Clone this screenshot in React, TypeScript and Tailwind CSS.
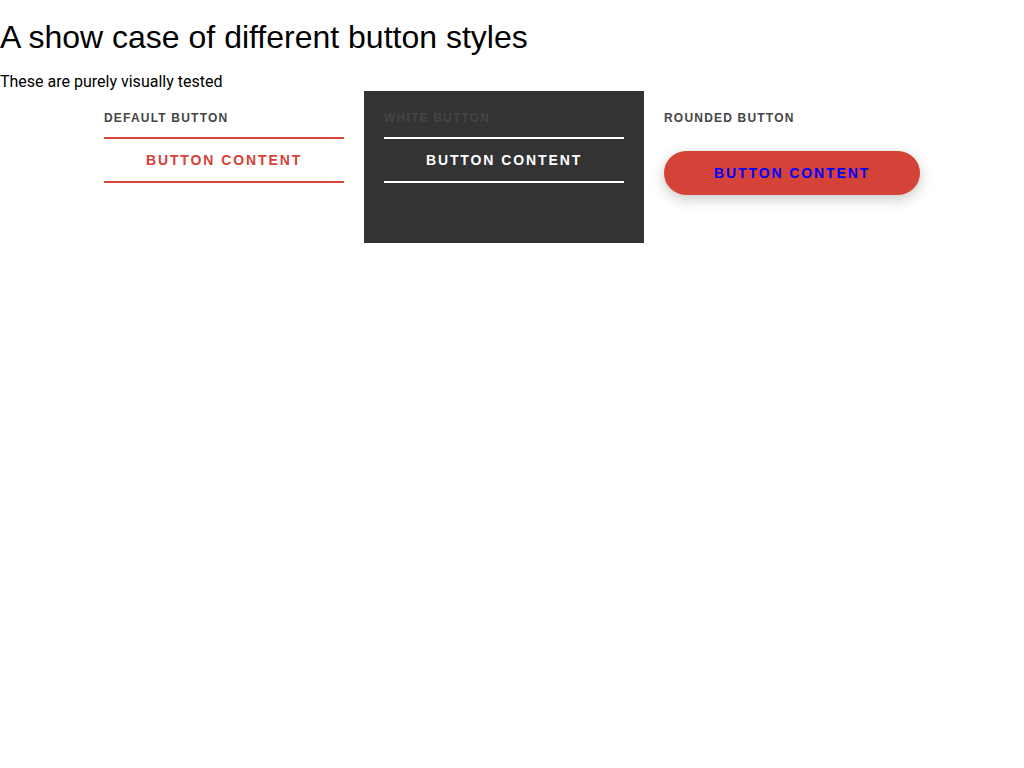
const labelClass =
    "mb-[12px] font-['Liberation_Sans',Arial,sans-serif] text-[12px] font-bold uppercase leading-[14px] tracking-[1.2px] text-[#454545]"

const buttonText =
    "font-['Liberation_Sans',Arial,sans-serif] text-[14px] font-bold uppercase tracking-[1.9px] whitespace-nowrap"

const App = () => {
    return (
        <div className="min-h-screen bg-white text-black">
            <h1 className="mt-[19px] mb-[16px] font-['Liberation_Sans',Arial,sans-serif] text-[32px] font-normal leading-[37px]">
                A show case of different button styles
            </h1>
            <p className="font-['Roboto',sans-serif] text-[16px] leading-[19px]">
                These are purely visually tested
            </p>

            <div className="flex pl-[84px]">
                <section className="w-[280px] px-5 pt-5">
                    <p className={labelClass}>Default button</p>
                    <button
                        className={`flex h-[46px] w-full items-center justify-center border-y-2 border-[#d54237] text-[#d54237] ${buttonText}`}
                    >
                        Button content
                    </button>
                </section>

                <section className="w-[280px] bg-[#333333] px-5 pt-5">
                    <p className={labelClass}>White button</p>
                    <button
                        className={`flex h-[46px] w-full items-center justify-center border-y-2 border-white text-white ${buttonText}`}
                    >
                        Button content
                    </button>
                </section>

                <section className="flex w-[280px] flex-col items-start px-5 pt-5 pb-5">
                    <p className={labelClass}>Rounded button</p>
                    <button
                        className={`mt-[14px] mb-[28px] flex h-[44px] w-max items-center justify-center rounded-full bg-[#d54237] px-[50px] text-[#0000ff] shadow-[0_4px_14px_rgba(0,0,0,0.22)] ${buttonText}`}
                    >
                        Button content
                    </button>
                </section>
            </div>
        </div>
    )
}

export default App
